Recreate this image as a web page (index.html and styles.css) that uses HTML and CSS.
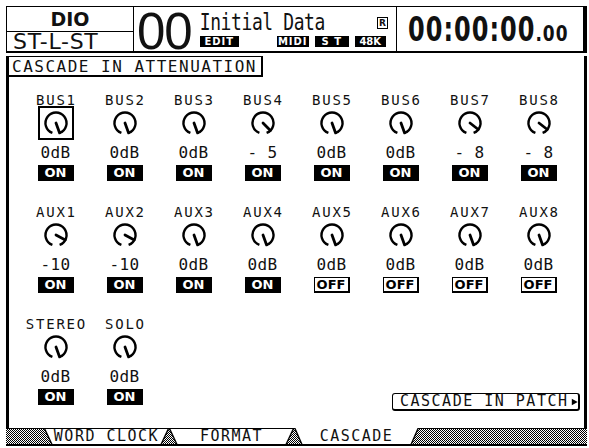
FILE: index.html
```html
<!DOCTYPE html>
<html lang="en">
<head>
  <meta charset="UTF-8">
  <meta name="viewport" content="width=device-width, initial-scale=1.0">
  <title>Cascade In Attenuation</title>
  <link rel="stylesheet" href="styles.css">
</head>
<body>
  <div class="screen">
    <div class="header">
      <div class="patch">
        <div class="patch-name">DIO</div>
        <div class="patch-sub">ST-L-ST</div>
      </div>
      <div class="scene">
        <div class="scene-num">00</div>
        <div class="scene-info">
          <div class="scene-title">
            <span class="scene-name">Initial Data</span>
            <span class="protect">R</span>
          </div>
          <div class="badges">
            <span class="badge edit">EDIT</span>
            <span class="badge midi">MIDI</span>
            <span class="badge st">S T</span>
            <span class="badge fs">48K</span>
          </div>
        </div>
      </div>
      <div class="clock">
        <span class="clock-big">00:00:00</span><span class="clock-small">.00</span>
      </div>
    </div>

    <div class="content">
      <div class="section-title">CASCADE IN ATTENUATION</div>
      <div class="row first" id="row-bus"></div>
      <div class="row" id="row-aux"></div>
      <div class="row last" id="row-master">
        <div class="patch-button">CASCADE IN PATCH<svg width="9" height="10" viewBox="0 0 9 10"><path d="M1 1 L8 5 L1 9 Z" fill="#000"/></svg></div>
      </div>
    </div>

    <div class="tabs">
      <div class="tab"><span>WORD CLOCK</span></div>
      <div class="tab"><span>FORMAT</span></div>
      <div class="tab active"><span>CASCADE</span></div>
    </div>
  </div>

  <script>
    // value -> pointer angle (degrees, clockwise from 3 o'clock)
    const ANGLES = { '0dB': 70, '- 5': 45, '- 8': 38, '-10': 28 };

    const rows = {
      'row-bus': [
        ['BUS1', '0dB', true], ['BUS2', '0dB', true], ['BUS3', '0dB', true], ['BUS4', '- 5', true],
        ['BUS5', '0dB', true], ['BUS6', '0dB', true], ['BUS7', '- 8', true], ['BUS8', '- 8', true]
      ],
      'row-aux': [
        ['AUX1', '-10', true], ['AUX2', '-10', true], ['AUX3', '0dB', true], ['AUX4', '0dB', true],
        ['AUX5', '0dB', false], ['AUX6', '0dB', false], ['AUX7', '0dB', false], ['AUX8', '0dB', false]
      ],
      'row-master': [
        ['STEREO', '0dB', true], ['SOLO', '0dB', true]
      ]
    };

    function knob(value) {
      const a = ANGLES[value] * Math.PI / 180;
      const x = (13 + 10.5 * Math.cos(a)).toFixed(1);
      const y = (13 + 10.5 * Math.sin(a)).toFixed(1);
      return `<svg width="26" height="26" viewBox="0 0 26 26">
        <path d="M9.4 22.9A10.5 10.5 0 1 1 16.6 22.9" fill="none" stroke="#000" stroke-width="2.4"/>
        <line x1="13" y1="13" x2="${x}" y2="${y}" stroke="#000" stroke-width="2.8" stroke-linecap="round"/>
      </svg>`;
    }

    Object.keys(rows).forEach(id => {
      const row = document.getElementById(id);
      const html = rows[id].map(([name, value, on]) => `
        <div class="cell">
          <div class="cell-name">${name}</div>
          <div class="knob${name === 'BUS1' ? ' selected' : ''}">${knob(value)}</div>
          <div class="cell-value">${value}</div>
          <div class="switch${on ? '' : ' off'}">${on ? 'ON' : 'OFF'}</div>
        </div>`).join('');
      row.insertAdjacentHTML('afterbegin', html);
    });
  </script>
</body>
</html>
```

FILE: styles.css
```css
* {
  box-sizing: border-box;
  margin: 0;
  padding: 0;
}
body {
  width: 589px;
  height: 448px;
  overflow: hidden;
  background-color: #fff;
  color: #111;
  font-family: "DejaVu Sans Mono", monospace;
}
.screen {
  margin: 6px 0 0 6px;
  width: 581px;
}

/* header */
.header {
  display: flex;
  height: 47px;
  border: 1px solid #000;
  border-right-width: 4px;
  border-bottom-width: 2px;
}
.patch {
  width: 127px;
  border-right: 1px solid #000;
}
.patch-name {
  height: 25px;
  border-bottom: 1px solid #000;
  text-align: center;
  font: bold 19px/24px "DejaVu Sans", sans-serif;
}
.patch-sub {
  padding-left: 6px;
  font: 22px/19px "DejaVu Sans", sans-serif;
  letter-spacing: 0.7px;
}
.scene {
  width: 263px;
  border-right: 1px solid #000;
  display: flex;
}
.scene-num {
  padding: 5px 0 0 3px;
  font: 51px/39px "Liberation Sans", sans-serif;
  letter-spacing: -1px;
}
.scene-info {
  flex: 1;
  margin-left: 8px;
  padding-right: 8px;
  display: flex;
  flex-direction: column;
}
.scene-title {
  display: flex;
  height: 28px;
  padding-top: 3px;
}
.scene-name {
  display: inline-block;
  height: 18px;
  font-size: 18px;
  line-height: 18px;
  letter-spacing: -0.4px;
  transform: scaleY(1.3);
  transform-origin: 0 0;
}
.protect {
  margin-left: auto;
  margin-top: 7px;
  width: 11px;
  height: 12px;
  border: 1px solid #000;
  text-align: center;
  font: bold 9px/10px "DejaVu Sans", sans-serif;
}
.badges {
  display: flex;
  gap: 6px;
  margin-top: 1px;
}
.badge {
  height: 11px;
  background-color: #000;
  color: #fff;
  text-align: center;
  font: bold 10px/11px "DejaVu Sans", sans-serif;
  letter-spacing: 1px;
}
.badge.edit { width: 39px; }
.badge.midi { width: 32px; margin-left: 32px; }
.badge.st { width: 34px; }
.badge.fs { width: 31px; letter-spacing: 0; }
.clock {
  flex: 1;
  display: flex;
  align-items: flex-end;
  padding: 0 0 9px 11px;
  font-family: "DejaVu Sans", sans-serif;
  font-weight: bold;
}
.clock-big {
  display: inline-block;
  font-size: 24px;
  line-height: 18px;
  letter-spacing: 1px;
  transform: scaleY(1.43);
  transform-origin: 50% 100%;
}
.clock-small {
  display: inline-block;
  font-size: 17px;
  line-height: 13px;
  letter-spacing: 1px;
  transform: scaleY(1.2);
  transform-origin: 50% 100%;
}

/* page body */
.content {
  height: 372px;
  border-left: 3px solid #000;
  border-right: 3px solid #000;
}
.section-title {
  width: 255px;
  height: 21px;
  margin: 3px 0 0 -1px;
  padding: 2px 0 0 3px;
  border: 1px solid #000;
  border-right-width: 2px;
  border-bottom-width: 2px;
  font-size: 16px;
  line-height: 16px;
  letter-spacing: 1.5px;
  white-space: nowrap;
}
.row {
  display: flex;
  padding-left: 12px;
  margin-top: 25px;
}
.row.first {
  margin-top: 17px;
}
.row.last {
  align-items: flex-end;
}
.cell {
  width: 69px;
  display: flex;
  flex-direction: column;
  align-items: center;
}
.cell-name {
  height: 12px;
  padding-left: 1.8px;
  font-size: 14px;
  line-height: 12px;
  letter-spacing: 1.8px;
}
.knob {
  width: 36px;
  height: 34px;
  border: 2px solid transparent;
  display: flex;
  align-items: center;
  justify-content: center;
}
.knob.selected {
  border-color: #000;
}
.cell-value {
  height: 25px;
  font-size: 16px;
  line-height: 25px;
  letter-spacing: 0.4px;
}
.switch {
  width: 36px;
  height: 16px;
  background-color: #000;
  color: #fff;
  text-align: center;
  font: bold 13px/16px "DejaVu Sans", sans-serif;
}
.switch.off {
  background-color: #fff;
  color: #000;
  border: 1px solid #000;
  border-right-width: 2px;
  border-bottom-width: 2px;
  line-height: 13px;
}
.patch-button {
  display: flex;
  align-items: center;
  gap: 2px;
  width: 188px;
  height: 18px;
  margin: 0 4px -6px auto;
  padding-left: 7px;
  border: 1px solid #000;
  border-right-width: 2px;
  border-bottom-width: 2px;
  border-radius: 3px;
  font-size: 15px;
  line-height: 15px;
  letter-spacing: 1.5px;
  white-space: nowrap;
}

/* tabs */
.tabs {
  display: flex;
  height: 18px;
  padding-left: 38px;
  border-top: 1px solid #000;
  border-bottom: 2px solid #000;
  background: repeating-conic-gradient(#000 0 25%, #fff 0 50%) 0 0 / 2px 2px;
}
.tab {
  width: 125px;
  height: 15px;
  background-color: #000;
  clip-path: polygon(0 0, 100% 0, calc(100% - 7px) 100%, 7px 100%);
}
.tab span {
  display: block;
  height: 100%;
  background-color: #fff;
  clip-path: polygon(1.5px 0, calc(100% - 1.5px) 0, calc(100% - 8.5px) 100%, 8.5px 100%);
  text-align: center;
  font-size: 15px;
  line-height: 15px;
  letter-spacing: 1.5px;
}
.tab.active {
  height: 16px;
  margin-top: -1px;
}
.tab.active span {
  line-height: 17px;
}
```
